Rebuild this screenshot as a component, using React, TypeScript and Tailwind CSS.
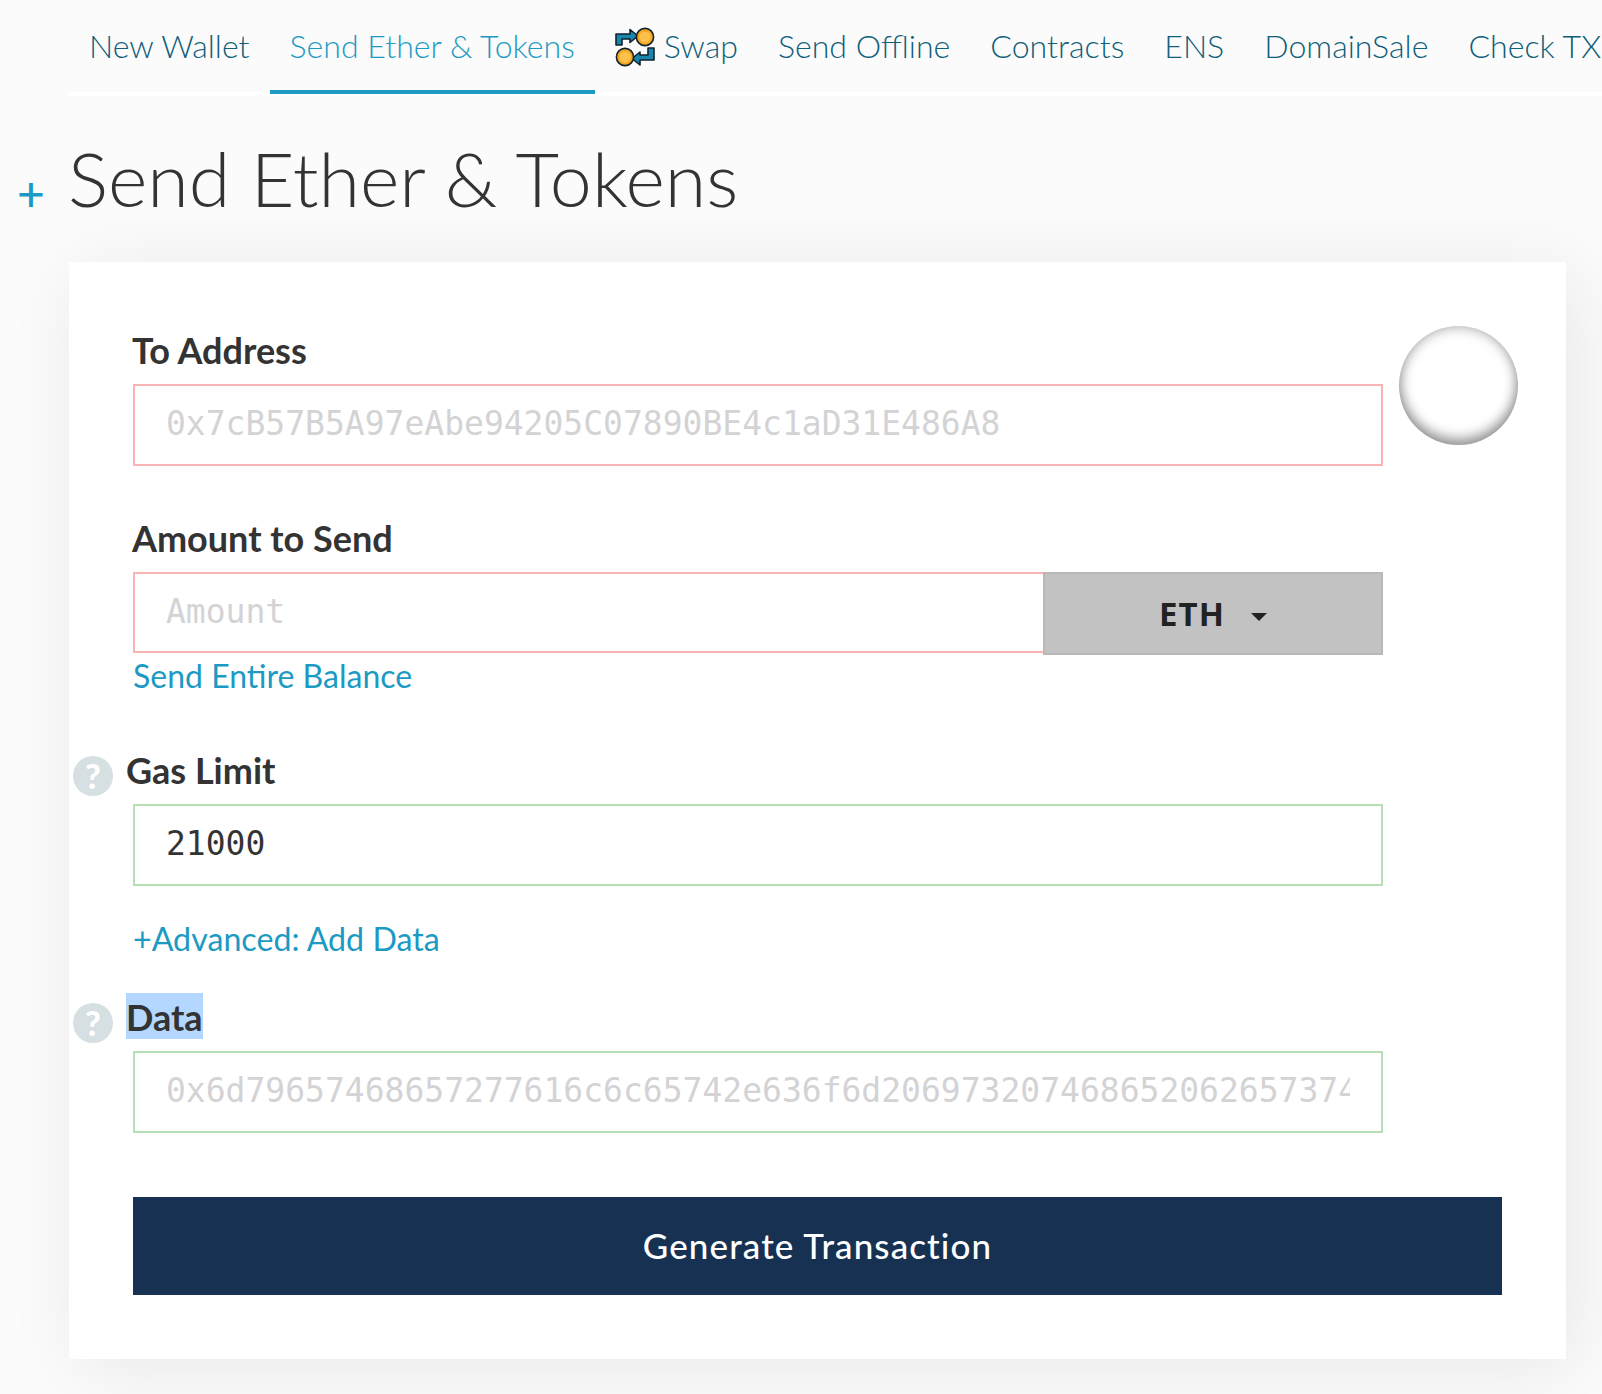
import React from 'react'

const tabs = ['Send Offline', 'Contracts', 'ENS', 'DomainSale', 'Check TX Status']

const SwapIcon = () => (
  <svg width="40" height="40" viewBox="0 0 40 40" className="mr-[9px] mt-[1px] shrink-0">
    <path d="M1 7h14V2.5l8 6.5-8 6.5V12H7v6H1z" fill="#1b86ad" stroke="#10222e" strokeWidth="1.6" strokeLinejoin="round" />
    <circle cx="30" cy="10" r="8.6" fill="#f7a823" stroke="#10222e" strokeWidth="1.6" />
    <circle cx="30" cy="10" r="5.6" fill="#fcc14a" />
    <path d="M39 21v12H25v5l-8-6.5 8-6.5v3h8v-7z" fill="#1b86ad" stroke="#10222e" strokeWidth="1.6" strokeLinejoin="round" />
    <circle cx="10" cy="30" r="8.6" fill="#f7a823" stroke="#10222e" strokeWidth="1.6" />
    <circle cx="10" cy="30" r="5.6" fill="#fcc14a" />
  </svg>
)

const HelpIcon = () => (
  <span className="mt-[10px] w-10 h-10 rounded-full bg-[#d6dfe1] text-white flex items-center justify-center text-[34px] leading-none font-black shrink-0">
    ?
  </span>
)

const App = () => {
  return (
    <div className="w-[1602px] h-[1394px] overflow-hidden bg-[#fbfbfb] font-['Lato',sans-serif] text-[#333]">
      <nav className="ml-[69px] h-[96px] box-border border-b-4 border-white flex font-light text-[32.08px] text-[#0f5f7a] whitespace-nowrap">
        <a className="h-[94px] px-5 pt-[2px] flex items-center shrink-0 border-b-4 border-transparent">New Wallet</a>
        <a className="h-[94px] px-5 pt-[2px] flex items-center shrink-0 text-[#1c9ac3] border-b-4 border-[#1c9ac3]">Send Ether &amp; Tokens</a>
        <a className="h-[94px] px-5 pt-[2px] flex items-center shrink-0 border-b-4 border-transparent">
          <SwapIcon />
          Swap
        </a>
        {tabs.map((t) => (
          <a key={t} className="h-[94px] px-5 pt-[2px] flex items-center shrink-0 border-b-4 border-transparent">{t}</a>
        ))}
      </nav>

      <div className="flex items-end h-[166px] pb-[46px] box-border pl-[18px]">
        <span className="w-[51px] text-[48px] leading-none font-medium text-[#1c9ac3] mb-[-1px] -ml-px">+</span>
        <h1 className="text-[75.4px] leading-none font-light">Send Ether &amp; Tokens</h1>
      </div>

      <main className="ml-[69px] w-[1497px] h-[1097px] box-border bg-white px-16 pt-[64px] shadow-[10px_10px_70px_rgba(0,0,0,0.08)]">
        <div className="flex items-start">
          <div className="w-[1250px] shrink-0">
            <label className="block font-bold text-[36px] leading-[48px] h-[58px] -ml-px">To Address</label>
            <input
              className="block w-full h-[82px] box-border px-[31px] pb-[3px] border-2 border-[#f9b5b5] outline-none font-['DejaVu_Sans_Mono',monospace] text-[33px] placeholder:text-[#d3d3d5]"
              placeholder="0x7cB57B5A97eAbe94205C07890BE4c1aD31E486A8"
            />
          </div>
          <div className="ml-4 w-[119px] h-[119px] shrink-0 rounded-full bg-white shadow-[inset_0_0_14px_rgba(0,0,0,0.35),inset_0_-8px_12px_rgba(0,0,0,0.25)]" />
        </div>

        <label className="block mt-[48px] font-bold text-[36px] leading-[48px] h-[58px] -ml-px">Amount to Send</label>
        <div className="flex w-[1250px]">
          <input
            className="w-[910px] h-[81px] box-border px-[31px] pb-[3px] border-2 border-r-0 border-[#f9b5b5] outline-none font-['DejaVu_Sans_Mono',monospace] text-[33px] placeholder:text-[#d3d3d5]"
            placeholder="Amount"
          />
          <button className="flex-1 h-[83px] box-border border-2 border-[#b8b8b8] bg-[#c2c2c2] text-[#222] flex items-center justify-center font-['Open_Sans',sans-serif] font-bold text-[33px] tracking-[1px]">
            ETH
            <span className="ml-[26px] mt-[6px] border-x-[8px] border-t-[8px] border-x-transparent border-t-[#222]" />
          </button>
        </div>
        <a className="block text-[#1c9ac3] text-[32px] leading-[48px] -mt-[3px]">Send Entire Balance</a>

        <div className="flex items-start gap-[13px] -ml-[60px] mt-[46px] h-[58px]">
          <HelpIcon />
          <label className="font-bold text-[36px] leading-[48px]">Gas Limit</label>
        </div>
        <input
          className="block w-[1250px] h-[82px] box-border px-[31px] pb-[3px] border-2 border-[#b6e0b4] outline-none font-['DejaVu_Sans_Mono',monospace] text-[33px] text-[#333]"
          defaultValue="21000"
        />
        <a className="block text-[#1c9ac3] text-[32.2px] leading-[48px] mt-[29px]">+Advanced: Add Data</a>

        <div className="flex items-start gap-[13px] -ml-[60px] mt-[30px] h-[58px]">
          <HelpIcon />
          <label className="font-bold text-[36px] h-[46px] leading-[48px] bg-[#b3d7ff]">Data</label>
        </div>
        <input
          className="block w-[1250px] h-[82px] box-border px-[31px] pb-[3px] border-2 border-[#b6e0b4] outline-none font-['DejaVu_Sans_Mono',monospace] text-[33px] placeholder:text-[#d3d3d5]"
          placeholder="0x6d79657468657277616c6c65742e636f6d2069732074686520626573740"
        />
        <button className="block mt-[64px] w-[1369px] h-[98px] pb-[2px] bg-[#163151] text-white text-[35px] font-medium tracking-[1.1px]">
          Generate Transaction
        </button>
      </main>
    </div>
  )
}

export default App
